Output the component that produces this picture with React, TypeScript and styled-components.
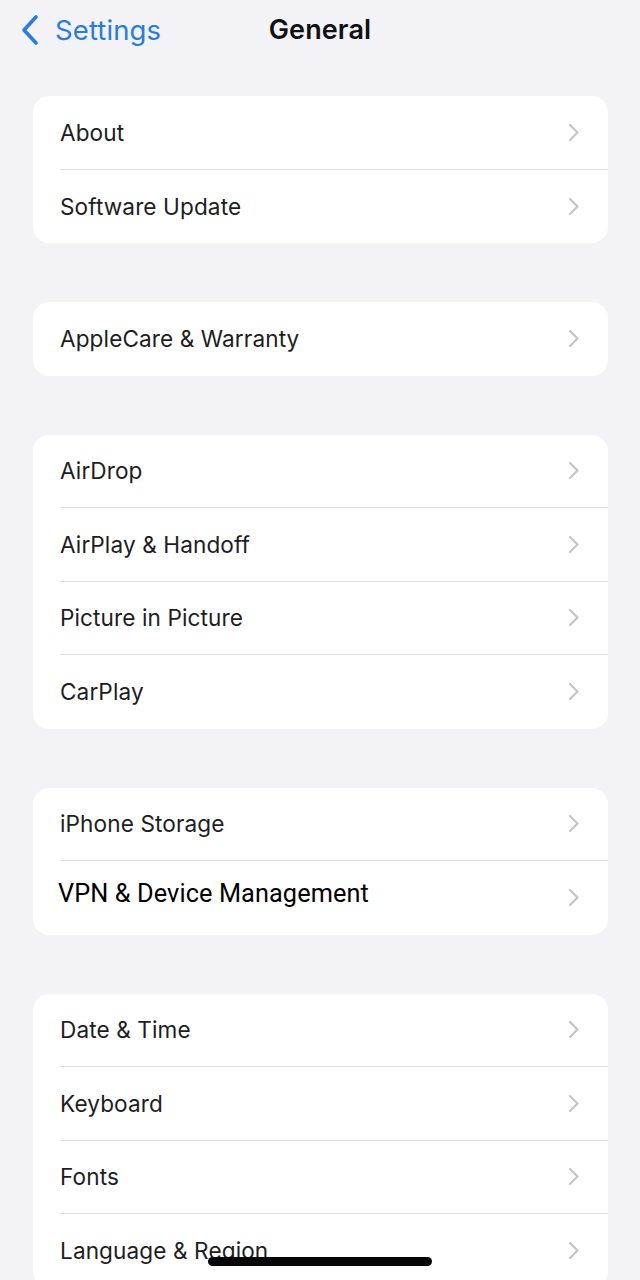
import React from "react";
import styled, { createGlobalStyle } from "styled-components";

const Global = createGlobalStyle`
  html, body { margin: 0; padding: 0; background: #f2f2f7; }
  body { font-family: Inter, "Noto Sans", "Liberation Sans", sans-serif; -webkit-font-smoothing: antialiased; }
`;

const Page = styled.div`
  width: 640px;
  height: 1280px;
  background: #f2f2f7;
  overflow: hidden;
`;

const Header = styled.header`
  height: 59px;
  display: grid;
  grid-template-columns: 1fr auto 1fr;
  align-items: center;
`;

const Back = styled.div`
  display: flex;
  align-items: center;
  gap: 15px;
  padding-left: 20px;
  color: #2b7ddb;
  font-size: 27.5px;
  font-weight: 400;
  letter-spacing: 0.1px;
`;

const Title = styled.h1`
  margin: 0;
  font-size: 27px;
  font-weight: 600;
  color: #111113;
  letter-spacing: 0.1px;
`;

const List = styled.main`
  display: flex;
  flex-direction: column;
  gap: 59px;
  padding: 37px 32px 0 33px;
`;

const Card = styled.section`
  background: #ffffff;
  border-radius: 16px;
  overflow: hidden;
`;

const Row = styled.div<{ $last?: boolean }>`
  height: 73.5px;
  margin-left: 27px;
  padding-right: 28px;
  display: flex;
  align-items: center;
  justify-content: space-between;
  box-sizing: border-box;
  border-bottom: ${(p) => (p.$last ? "none" : "1px solid #dedee2")};
`;

const Label = styled.span<{ $pasted?: boolean }>`
  font-family: ${(p) => (p.$pasted ? "Roboto, 'Noto Sans', sans-serif" : "Inter, 'Noto Sans', sans-serif")};
  font-size: ${(p) => (p.$pasted ? "25.3px" : "22.6px")};
  color: ${(p) => (p.$pasted ? "#000000" : "#1d1d1f")};
  margin-left: ${(p) => (p.$pasted ? "-2px" : "0")};
  margin-top: ${(p) => (p.$pasted ? "-8px" : "0")};
  letter-spacing: 0.1px;
`;

const HomeIndicator = styled.div`
  position: fixed;
  left: 208px;
  top: 1257px;
  width: 224px;
  height: 9px;
  border-radius: 5px;
  background: #050505;
`;

const Chevron = () => (
  <svg width="12" height="19" viewBox="0 0 12 19" fill="none">
    <path d="M2 2l7.5 7.5L2 17" stroke="#c4c4c8" strokeWidth="2.2" strokeLinecap="round" strokeLinejoin="round" />
  </svg>
);

const BackChevron = () => (
  <svg width="20" height="32" viewBox="0 0 20 32" fill="none">
    <path d="M16 3L4 16l12 13" stroke="#2b7ddb" strokeWidth="3.6" strokeLinecap="round" strokeLinejoin="round" />
  </svg>
);

const groups: { label: string; pasted?: boolean }[][] = [
  [{ label: "About" }, { label: "Software Update" }],
  [{ label: "AppleCare & Warranty" }],
  [{ label: "AirDrop" }, { label: "AirPlay & Handoff" }, { label: "Picture in Picture" }, { label: "CarPlay" }],
  [{ label: "iPhone Storage" }, { label: "VPN & Device Management", pasted: true }],
  [{ label: "Date & Time" }, { label: "Keyboard" }, { label: "Fonts" }, { label: "Language & Region" }],
];

export default function App() {
  return (
    <Page>
      <Global />
      <Header>
        <Back>
          <BackChevron />
          <span>Settings</span>
        </Back>
        <Title>General</Title>
        <div />
      </Header>
      <List>
        {groups.map((g, gi) => (
          <Card key={gi}>
            {g.map((item, i) => (
              <Row key={item.label} $last={i === g.length - 1}>
                <Label $pasted={item.pasted}>{item.label}</Label>
                <Chevron />
              </Row>
            ))}
          </Card>
        ))}
      </List>
      <HomeIndicator />
    </Page>
  );
}
